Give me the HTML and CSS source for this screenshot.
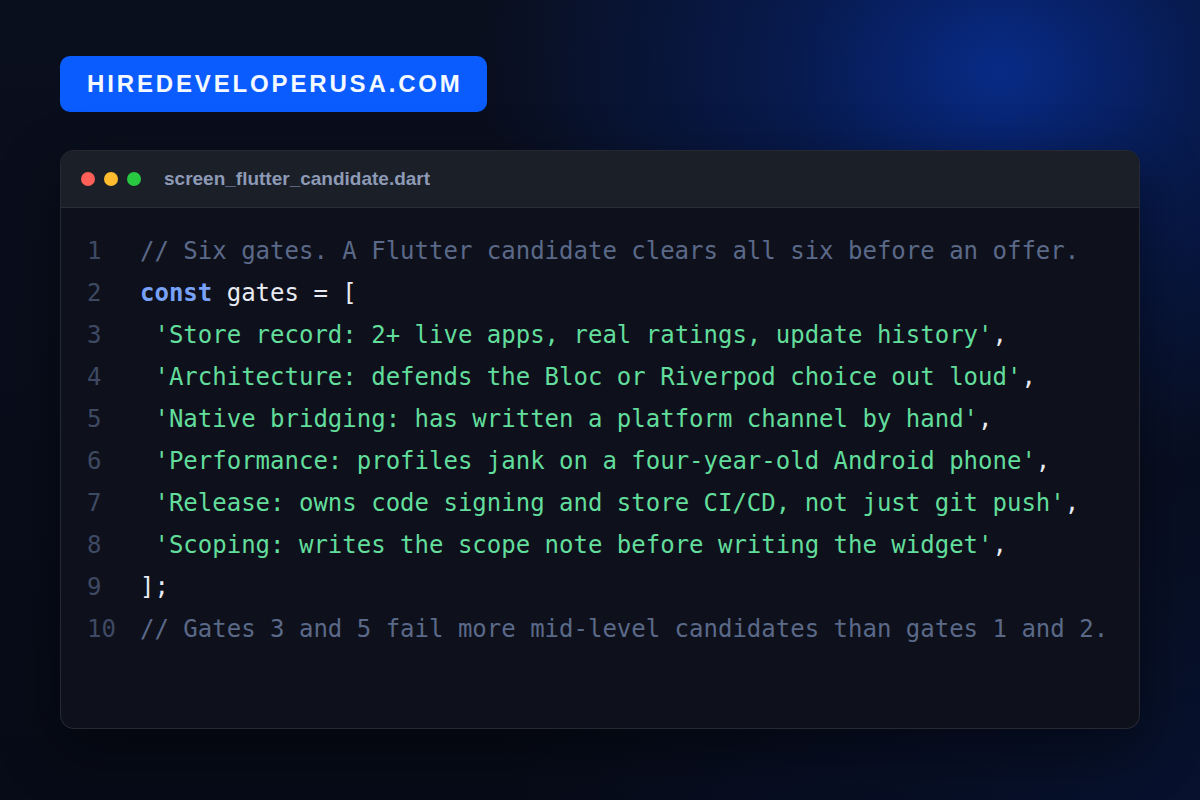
FILE: index.html
```html
<!DOCTYPE html>
<html lang="en">
<head>
<meta charset="utf-8">
<title>screen_flutter_candidate.dart</title>
<link rel="stylesheet" href="styles.css">
</head>
<body>
<main class="page">
  <div class="badge">HIREDEVELOPERUSA.COM</div>
  <section class="window">
    <header class="titlebar">
      <span class="dot dot-red"></span>
      <span class="dot dot-yellow"></span>
      <span class="dot dot-green"></span>
      <span class="filename">screen_flutter_candidate.dart</span>
    </header>
    <div class="code">
      <div class="line"><span class="ln">1</span><span class="src cm">// Six gates. A Flutter candidate clears all six before an offer.</span></div>
      <div class="line"><span class="ln">2</span><span class="src"><span class="kw">const</span> gates = [</span></div>
      <div class="line"><span class="ln">3</span><span class="src"> <span class="str">'Store record: 2+ live apps, real ratings, update history'</span>,</span></div>
      <div class="line"><span class="ln">4</span><span class="src"> <span class="str">'Architecture: defends the Bloc or Riverpod choice out loud'</span>,</span></div>
      <div class="line"><span class="ln">5</span><span class="src"> <span class="str">'Native bridging: has written a platform channel by hand'</span>,</span></div>
      <div class="line"><span class="ln">6</span><span class="src"> <span class="str">'Performance: profiles jank on a four-year-old Android phone'</span>,</span></div>
      <div class="line"><span class="ln">7</span><span class="src"> <span class="str">'Release: owns code signing and store CI/CD, not just git push'</span>,</span></div>
      <div class="line"><span class="ln">8</span><span class="src"> <span class="str">'Scoping: writes the scope note before writing the widget'</span>,</span></div>
      <div class="line"><span class="ln">9</span><span class="src">];</span></div>
      <div class="line"><span class="ln">10</span><span class="src cm">// Gates 3 and 5 fail more mid-level candidates than gates 1 and 2.</span></div>
    </div>
  </section>
</main>
</body>
</html>
```

FILE: styles.css
```css
* { box-sizing: border-box; }
html, body {
  margin: 0;
  width: 1200px;
  height: 800px;
  overflow: hidden;
}
body {
  background-color: #060a15;
  background-image:
    radial-gradient(ellipse 520px 420px at 1000px 70px, rgba(8, 44, 140, 0.95) 0%, rgba(6, 34, 110, 0.6) 40%, rgba(6, 20, 60, 0) 100%),
    radial-gradient(ellipse 700px 500px at 1200px 800px, rgba(8, 30, 90, 0.35) 0%, rgba(6, 10, 21, 0) 100%),
    linear-gradient(180deg, #0a0f1e 0%, #070b17 100%);
  font-family: "Liberation Sans", Arial, sans-serif;
}
.page {
  padding: 56px 60px 0 60px;
  display: flex;
  flex-direction: column;
  align-items: flex-start;
}
.badge {
  background: #0a5cff;
  color: #f4f8ff;
  border-radius: 10px;
  height: 56px;
  padding: 0 24px 0 27px;
  display: flex;
  align-items: center;
  font-weight: 700;
  font-size: 24px;
  letter-spacing: 2.85px;
}
.window {
  margin-top: 38px;
  width: 1080px;
  height: 579px;
  border-radius: 14px;
  border: 1px solid rgba(255, 255, 255, 0.1);
  background: #0e111b;
  overflow: hidden;
  box-shadow: 0 20px 60px rgba(0, 0, 0, 0.45);
  display: flex;
  flex-direction: column;
}
.titlebar {
  height: 57px;
  flex: none;
  background: #1b1f28;
  border-bottom: 1px solid rgba(255, 255, 255, 0.07);
  display: flex;
  align-items: center;
  padding-left: 20px;
}
.dot {
  width: 14px;
  height: 14px;
  border-radius: 50%;
  margin-right: 9px;
}
.dot-red { background: #fe5f57; }
.dot-yellow { background: #febc2e; }
.dot-green { background: #28c840; }
.filename {
  margin-left: 14px;
  color: #8d9ab5;
  font-weight: 700;
  font-size: 19px;
}
.code {
  padding: 22px 0 0 26px;
  font-family: "DejaVu Sans Mono", "Liberation Mono", monospace;
  font-size: 24px;
  line-height: 42px;
  color: #e8ebf2;
}
.line {
  display: flex;
  white-space: pre;
}
.ln {
  width: 53px;
  flex: none;
  color: #3e4963;
}
.cm { color: #5b6989; }
.kw { color: #78a2f8; font-weight: 700; }
.str { color: #62dd9c; }
```
